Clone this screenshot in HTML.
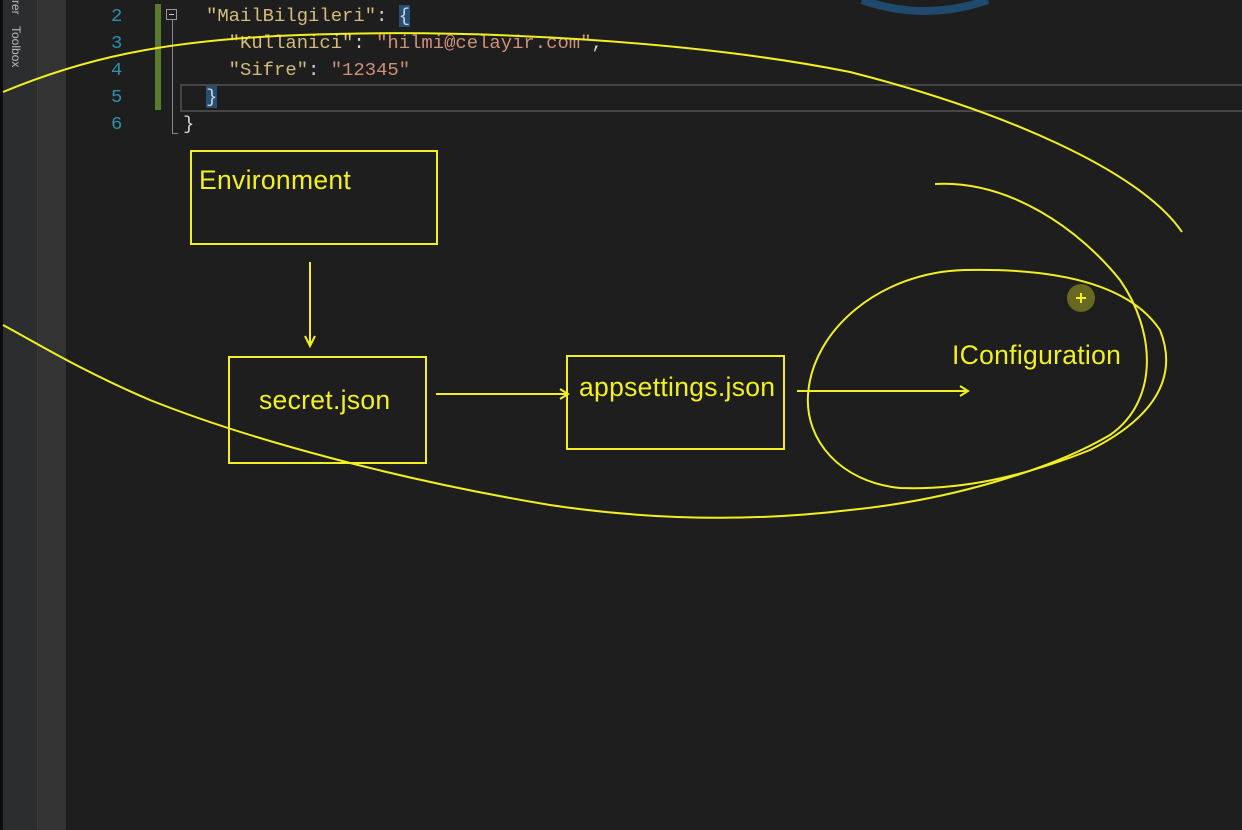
<!DOCTYPE html>
<html><head><meta charset="utf-8"><style>
html,body{margin:0;padding:0;background:#1e1e1e;width:1242px;height:830px;overflow:hidden;position:relative}
.sb1{position:absolute;left:0;top:0;width:3px;height:830px;background:#0c0c0c}
.sb2{position:absolute;left:3px;top:0;width:34px;height:830px;background:#2b2d2e}
.sb3{position:absolute;left:37px;top:0;width:28px;height:830px;background:#333333;border-left:1px solid #3c3c3c}
.code{position:absolute;font-family:"Liberation Mono",monospace;font-size:18.9px;line-height:27px;white-space:pre}
.ln{color:#2b91af}
.k{color:#d7ba7d}.s{color:#ce9178}.p{color:#d4d4d4}
.lbl{position:absolute;font-family:"Liberation Sans",sans-serif;color:#f2f022;font-size:26.5px;letter-spacing:0.3px}
</style></head><body>
<div class="sb1"></div><div class="sb2"></div><div class="sb3"></div>
<div style="position:absolute;left:9px;top:0;color:#bbb;font:12px 'Liberation Sans',sans-serif;writing-mode:vertical-rl">rer</div>
<div style="position:absolute;left:9px;top:26px;color:#bbb;font:12px 'Liberation Sans',sans-serif;writing-mode:vertical-rl">Toolbox</div>
<div style="position:absolute;left:155px;top:4px;width:6px;height:106px;background:#5a7a2e"></div>
<div style="position:absolute;left:180px;top:84px;width:1062px;height:24px;border:2px solid #464646;border-right:none"></div>
<div style="position:absolute;left:166px;top:9px;width:11px;height:11px;border:1px solid #999;box-sizing:border-box"></div>
<div style="position:absolute;left:169px;top:14px;width:5px;height:1px;background:#ccc"></div>
<div style="position:absolute;left:172px;top:20px;width:1px;height:113px;background:#888"></div>
<div style="position:absolute;left:172px;top:133px;width:6px;height:1px;background:#888"></div>
<div class="code ln" style="left:111px;top:3px">2
3
4
5
6</div>
<div class="code" style="left:206px;top:3px"><span class="k">"MailBilgileri"</span><span class="p">: </span><span class="p" style="background:#264f78">{</span>
<span class="k">  "Kullanici"</span><span class="p">: </span><span class="s">"hilmi@celayir.com"</span><span class="p">,</span>
<span class="k">  "Sifre"</span><span class="p">: </span><span class="s">"12345"</span>
<span class="p" style="background:#264f78">}</span></div>
<div class="code p" style="left:183px;top:111px">}</div>
<svg width="1242" height="830" style="position:absolute;left:0;top:0" fill="none">
<path d="M862 0 Q925 22 988 0" stroke="#1f4a6e" stroke-width="8"/>
<g stroke="#f2f022" stroke-width="2">
<rect x="191" y="151" width="246" height="93"/>
<rect x="229" y="357" width="197" height="106"/>
<rect x="567" y="356" width="217" height="93"/>
<path d="M310 262 V345 M305 336 L310 346 L315 336"/>
<path d="M436 394 H567 M560 389 L568 394 L560 399"/>
<path d="M797 391 H968 M960 386 L968 391 L960 396"/>
<path d="M3 92 C80 60 160 40 300 35 C480 28 700 42 850 72 C1000 110 1140 170 1182 232"/>
<path d="M935 184 C1010 180 1080 230 1120 280 C1155 330 1160 400 1110 435 C1050 470 950 500 850 510 C750 522 650 520 550 505 C400 480 250 440 150 400 C80 370 40 345 3 325"/>
<path d="M965 270 C1060 268 1130 285 1160 330 C1180 380 1150 420 1090 450 C1020 478 960 490 900 488 C840 482 805 440 808 395 C812 330 880 272 965 270 Z"/>
</g>
<circle cx="1081" cy="298" r="14" fill="#7a7a22" opacity="0.8"/>
<path d="M1076 298 H1086 M1081 293 V303" stroke="#f2f022" stroke-width="2"/>
</svg>
<div class="lbl" style="left:199px;top:165px">Environment</div>
<div class="lbl" style="left:259px;top:385px">secret.json</div>
<div class="lbl" style="left:579px;top:372px">appsettings.json</div>
<div class="lbl" style="left:952px;top:340px">IConfiguration</div>
</body></html>
